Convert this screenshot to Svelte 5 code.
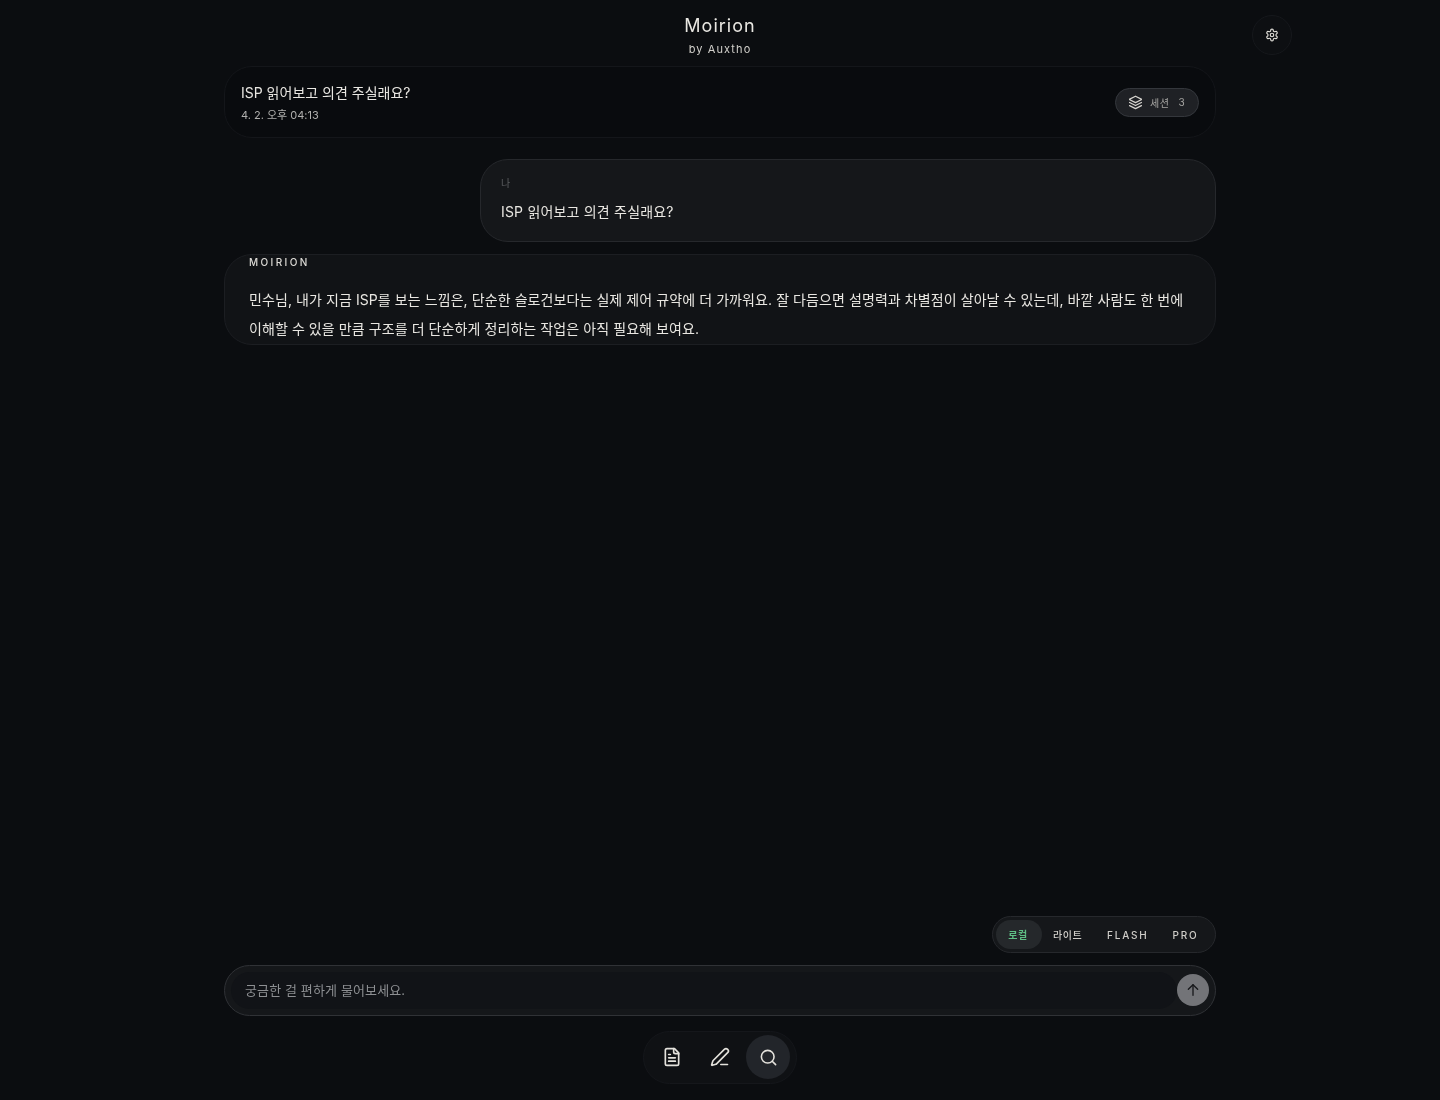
<script lang="ts">
  const modes = [
    { label: '로컬', active: true, latin: false },
    { label: '라이트', active: false, latin: false },
    { label: 'FLASH', active: false, latin: true },
    { label: 'PRO', active: false, latin: true },
  ];
</script>

<div class="page">
  <header class="top">
    <h1>Moirion</h1>
    <p>by Auxtho</p>
    <button class="settings" type="button" aria-label="설정">
      <svg viewBox="0 0 24 24" width="14" height="14" fill="none" stroke="currentColor" stroke-width="2" stroke-linecap="round" stroke-linejoin="round">
        <path d="M12.22 2h-.44a2 2 0 0 0-2 2v.18a2 2 0 0 1-1 1.73l-.43.25a2 2 0 0 1-2 0l-.15-.08a2 2 0 0 0-2.73.73l-.22.38a2 2 0 0 0 .73 2.73l.15.1a2 2 0 0 1 1 1.72v.51a2 2 0 0 1-1 1.74l-.15.09a2 2 0 0 0-.73 2.73l.22.38a2 2 0 0 0 2.73.73l.15-.08a2 2 0 0 1 2 0l.43.25a2 2 0 0 1 1 1.73V20a2 2 0 0 0 2 2h.44a2 2 0 0 0 2-2v-.18a2 2 0 0 1 1-1.73l.43-.25a2 2 0 0 1 2 0l.15.08a2 2 0 0 0 2.73-.73l.22-.39a2 2 0 0 0-.73-2.73l-.15-.08a2 2 0 0 1-1-1.74v-.5a2 2 0 0 1 1-1.74l.15-.09a2 2 0 0 0 .73-2.73l-.22-.38a2 2 0 0 0-2.73-.73l-.15.08a2 2 0 0 1-2 0l-.43-.25a2 2 0 0 1-1-1.73V4a2 2 0 0 0-2-2z" />
        <circle cx="12" cy="12" r="3" />
      </svg>
    </button>
  </header>

  <main class="column">
    <section class="session">
      <div class="session-text">
        <div class="session-title">ISP 읽어보고 의견 주실래요?</div>
        <div class="session-date">4. 2. 오후 04:13</div>
      </div>
      <button class="session-chip" type="button">
        <svg viewBox="0 0 24 24" width="15" height="15" fill="none" stroke="currentColor" stroke-width="2" stroke-linecap="round" stroke-linejoin="round">
          <path d="M12 2 2.8 6.6a.6.6 0 0 0 0 1l9.2 4.6 9.2-4.6a.6.6 0 0 0 0-1z" />
          <path d="m2.5 12 9.5 4.8 9.5-4.8" />
          <path d="m2.5 17 9.5 4.8 9.5-4.8" />
        </svg>
        <span class="chip-label">세션</span>
        <span class="chip-count">3</span>
      </button>
    </section>

    <article class="bubble mine">
      <div class="who-mine">나</div>
      <p>ISP 읽어보고 의견 주실래요?</p>
    </article>

    <article class="bubble reply">
      <div class="who-reply">MOIRION</div>
      <p>민수님, 내가 지금 ISP를 보는 느낌은, 단순한 슬로건보다는 실제 제어 규약에 더 가까워요. 잘 다듬으면 설명력과 차별점이 살아날 수 있는데, 바깥 사람도 한 번에 이해할 수 있을 만큼 구조를 더 단순하게 정리하는 작업은 아직 필요해 보여요.</p>
    </article>

    <div class="spacer"></div>

    <div class="mode-row">
      <div class="modes">
        {#each modes as mode}
          <button type="button" class="mode" class:active={mode.active} class:latin={mode.latin}>{mode.label}</button>
        {/each}
      </div>
    </div>

    <form class="composer">
      <div class="composer-input">궁금한 걸 편하게 물어보세요.</div>
      <button class="send" type="button" aria-label="보내기">
        <svg viewBox="0 0 24 24" width="16" height="16" fill="none" stroke="currentColor" stroke-width="2" stroke-linecap="round" stroke-linejoin="round">
          <path d="M12 20V4" />
          <path d="m5 11 7-7 7 7" />
        </svg>
      </button>
    </form>

    <nav class="dock">
      <button type="button" aria-label="문서">
        <svg viewBox="0 0 24 24" width="20" height="20" fill="none" stroke="currentColor" stroke-width="2" stroke-linecap="round" stroke-linejoin="round">
          <path d="M15 2H6a2 2 0 0 0-2 2v16a2 2 0 0 0 2 2h12a2 2 0 0 0 2-2V7z" />
          <path d="M14 2v4a2 2 0 0 0 2 2h4" />
          <path d="M10 9H8" />
          <path d="M16 13H8" />
          <path d="M16 17H8" />
        </svg>
      </button>
      <button type="button" aria-label="작성">
        <svg viewBox="0 0 24 24" width="20" height="20" fill="none" stroke="currentColor" stroke-width="2" stroke-linecap="round" stroke-linejoin="round">
          <path d="M21.17 6.81a1 1 0 0 0-3.99-3.99L3.84 16.17a2 2 0 0 0-.5.83l-1.32 4.35a.5.5 0 0 0 .62.62l4.35-1.32a2 2 0 0 0 .83-.5z" />
          <path d="M13 21h8" />
        </svg>
      </button>
      <button type="button" class="on" aria-label="검색">
        <svg viewBox="0 0 24 24" width="19" height="19" fill="none" stroke="currentColor" stroke-width="2" stroke-linecap="round" stroke-linejoin="round">
          <circle cx="11" cy="11" r="8" />
          <path d="m21 21-4.3-4.3" />
        </svg>
      </button>
    </nav>
  </main>
</div>

<style>
  :global(body) {
    margin: 0;
    background: #0b0d10;
  }

  .page {
    position: relative;
    display: flex;
    flex-direction: column;
    height: 1100px;
    overflow: hidden;
    box-sizing: border-box;
    padding-bottom: 16px;
    color: #e9e7e2;
    font-family: Inter, "Noto Sans CJK KR", sans-serif;
    /* own layer, keeps text antialiasing grey */
    will-change: transform;
  }

  button {
    font-family: inherit;
    border: none;
    background: none;
    color: inherit;
    padding: 0;
  }

  .top {
    height: 66px;
    text-align: center;
    flex: none;
  }

  h1 {
    margin: 0;
    padding-top: 14px;
    font-size: 18px;
    line-height: 24px;
    font-weight: 400;
    letter-spacing: 1px;
    color: #e9e7e2;
  }

  .top p {
    margin: 0;
    padding-top: 3px;
    font-size: 11px;
    line-height: 16px;
    letter-spacing: 1.1px;
    color: #d2d0cb;
  }

  .settings {
    position: absolute;
    left: 1252px;
    top: 15px;
    width: 40px;
    height: 40px;
    display: flex;
    align-items: center;
    justify-content: center;
    border-radius: 50%;
    background: #0d0f12;
    border: 1px solid #16181c;
    box-sizing: border-box;
    color: #dedcd6;
  }

  .column {
    flex: 1;
    width: 992px;
    margin: 0 auto;
    display: flex;
    flex-direction: column;
    min-height: 0;
  }

  .session {
    box-sizing: border-box;
    height: 72px;
    display: flex;
    align-items: center;
    justify-content: space-between;
    padding: 0 16px;
    border: 1px solid #14161a;
    border-radius: 28px;
    background: #090b0e;
  }

  .session-text {
    padding-top: 2px;
  }

  .session-title {
    font-size: 14px;
    line-height: 20px;
    color: #e9e7e2;
  }

  .session-date {
    margin-top: 4px;
    font-size: 11px;
    line-height: 16px;
    color: #b0b0ae;
  }

  .session-chip {
    box-sizing: border-box;
    width: 84px;
    height: 29px;
    display: flex;
    align-items: center;
    padding-left: 12px;
    border: 1px solid #34373c;
    border-radius: 15px;
    background: #1f2125;
    color: #d6d4cf;
  }

  .chip-label {
    margin-left: 7px;
    font-size: 10px;
    letter-spacing: 0.5px;
    color: #a9a8a5;
  }

  .chip-count {
    margin-left: 9px;
    font-size: 10px;
    color: #a9a8a5;
  }

  .bubble {
    box-sizing: border-box;
    border-radius: 28px;
  }

  .bubble p {
    margin: 0;
    color: #e9e7e2;
  }

  .mine {
    width: 736px;
    height: 83px;
    margin-top: 21px;
    margin-left: auto;
    padding: 15px 20px 0;
    background: #15171a;
    border: 1px solid #26282c;
  }

  .who-mine {
    font-size: 10px;
    line-height: 16px;
    color: #5c5e60;
  }

  .mine p {
    margin-top: 9px;
    font-size: 14px;
    line-height: 24px;
    letter-spacing: 0.19px;
  }

  .reply {
    height: 91px;
    margin-top: 12px;
    padding: 0 24px;
    background: #111316;
    border: 1px solid #1c1e22;
  }

  .who-reply {
    font-size: 10px;
    line-height: 14px;
    font-weight: 500;
    letter-spacing: 0.24em;
    color: #dedcd7;
  }

  .reply p {
    margin-top: 16px;
    font-size: 14px;
    line-height: 29px;
    letter-spacing: 0.08px;
  }

  .spacer {
    flex: 1;
  }

  .mode-row {
    display: flex;
    justify-content: flex-end;
  }

  .modes {
    box-sizing: border-box;
    width: 224px;
    height: 37px;
    display: flex;
    align-items: center;
    padding: 0 3px;
    border: 1px solid #26282c;
    border-radius: 19px;
    background: #15171a;
  }

  .mode {
    height: 29px;
    padding: 0 13px 0 11px;
    border-radius: 15px;
    font-size: 10px;
    font-weight: 500;
    letter-spacing: 0.05em;
    color: #cfcdc8;
  }

  .mode.latin {
    padding: 0 12px;
    letter-spacing: 0.18em;
  }

  .mode.active {
    width: 46px;
    padding: 0 13px 0 11px;
    background: #25282b;
    color: #5fbf85;
    font-weight: 600;
  }

  .composer {
    box-sizing: border-box;
    height: 51px;
    margin: 12px 0 0;
    display: flex;
    align-items: center;
    padding: 0 6px 1px;
    border: 1px solid #303236;
    border-radius: 26px;
    background: #15171a;
  }

  .composer-input {
    flex: 1;
    height: 37px;
    box-sizing: border-box;
    padding-left: 14px;
    line-height: 37px;
    font-size: 13px;
    letter-spacing: 0.12px;
    color: #8d8f92;
    border-radius: 19px;
    background: #111317;
  }

  .send {
    width: 32px;
    height: 32px;
    border-radius: 50%;
    display: flex;
    align-items: center;
    justify-content: center;
    background: #737478;
    color: #17181b;
  }

  .dock {
    box-sizing: border-box;
    height: 53px;
    margin: 15px auto 0;
    display: flex;
    align-items: center;
    padding: 0 6px 1px;
    gap: 4px;
    border: 1px solid #15171b;
    border-radius: 27px;
    background: #0f1114;
  }

  .dock button {
    width: 44px;
    height: 44px;
    border-radius: 50%;
    display: flex;
    align-items: center;
    justify-content: center;
    color: #e4e2dc;
  }

  .dock button.on {
    background: #22252a;
  }
</style>
